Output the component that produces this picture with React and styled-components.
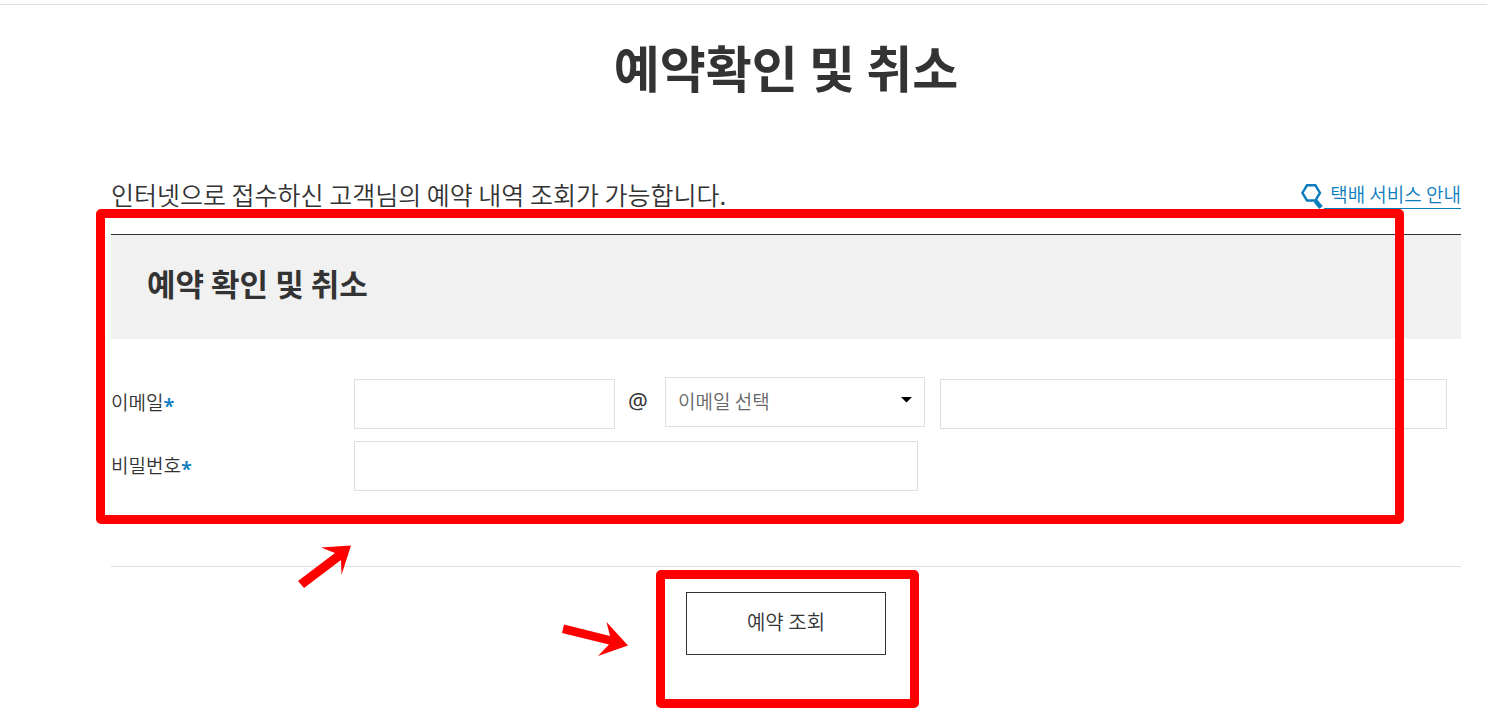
import styled, { createGlobalStyle } from "styled-components"

const colors = {
    text: '#333333',
    select_text: '#666666',
    blue: '#0b7dbd',
    panel_grey: '#f1f1f1',
    border: '#dfdfdf',
    mark_red: '#ff0000',
}

const GlobalStyle = createGlobalStyle`
    * {
        box-sizing: border-box;
    }
    body {
        margin: 0;
        background-color: white;
        color: ${colors.text};
        font-family: 'Noto Sans CJK KR', 'Noto Sans', sans-serif;
        font-size: 19px;
        line-height: 28px;
    }
    input, select, button {
        font: inherit;
        color: inherit;
    }
`

const TopLine = styled.div`
    height: 5px;
    border-bottom: 1px solid ${colors.border};
`
const Page = styled.main`
    padding: 29px 26px 64px 111px;
`
const PageTitle = styled.h1`
    margin: 0 0 82px;
    font-size: 50px;
    line-height: 64px;
    font-weight: 700;
    text-align: center;
`
const IntroRow = styled.div`
    display: flex;
    align-items: flex-start;
    justify-content: space-between;
    height: 54px;
`
const IntroText = styled.p`
    margin: 0;
    font-size: 25px;
    font-weight: 350;
`
const GuideLink = styled.a`
    display: flex;
    align-items: flex-start;
    color: ${colors.blue};
    font-weight: 350;
    text-decoration: none;

    svg {
        margin-top: 4px;
    }
`
const GuideText = styled.span`
    padding-left: 6px;
    border-bottom: 1px solid ${colors.blue};
`
const FormSection = styled.section`
    position: relative;
    border-top: 1px solid ${colors.text};
    border-bottom: 1px solid ${colors.border};
    padding-bottom: 63px;
`
const SectionTitle = styled.h2`
    margin: 0 0 38px;
    padding: 26px 36px 34px;
    background-color: ${colors.panel_grey};
    font-size: 31px;
    line-height: 44px;
    font-weight: 700;
`
const FieldRow = styled.div`
    display: flex;
    align-items: flex-start;
    margin-bottom: 12px;
`
const FieldLabel = styled.label`
    flex: 0 0 243px;
    line-height: 50px;
    font-weight: 350;
`
const PasswordLabel = styled(FieldLabel)`
    line-height: 48px;
`
const Star = styled.span`
    color: ${colors.blue};
    font-family: 'Noto Sans', sans-serif;
    font-size: 20px;
    font-weight: 600;
    line-height: 1;
    vertical-align: -3px;
`
const Fields = styled.div`
    flex: 1;
    display: flex;
    align-items: flex-end;
    padding-right: 14px;
    height: 52px;
`
const TextInput = styled.input`
    flex: ${props => props.$grow} 1 ${props => props.$grow}px;
    min-width: 0;
    height: 50px;
    padding: 0 12px;
    border: 1px solid ${colors.border};
    border-radius: 0;
    background-color: white;
`
const AtSign = styled.span`
    flex: 0 0 50px;
    align-self: flex-start;
    padding-right: 4px;
    line-height: 46px;
    text-align: center;
    font-family: 'Noto Sans', sans-serif;
    font-size: 22px;
`
const SelectBox = styled.div`
    position: relative;
    flex: 260 1 260px;
    align-self: flex-start;
    margin-right: 15px;

    svg {
        position: absolute;
        top: 20px;
        right: 13px;
        pointer-events: none;
    }
`
const Select = styled.select`
    display: block;
    width: 100%;
    height: 50px;
    padding: 0 12px 2px;
    border: 1px solid ${colors.border};
    border-radius: 0;
    background-color: white;
    color: ${colors.select_text};
    font-weight: 350;
    appearance: none;
`
const PasswordField = styled.div`
    flex: 1;
    display: flex;
`
const PasswordSpace = styled.div`
    flex: 543 1 543px;
`
const ButtonRow = styled.div`
    display: flex;
    justify-content: center;
    padding-top: 25px;
`
const ButtonBox = styled.div`
    position: relative;
`
const SubmitButton = styled.button`
    display: block;
    width: 200px;
    height: 63px;
    padding: 0 0 4px;
    border: 1px solid ${colors.text};
    background-color: white;
    font-size: 20px;
    font-weight: 350;
    cursor: pointer;
`
const MarkFrame = styled.div`
    position: absolute;
    border: 9px solid ${colors.mark_red};
    border-radius: 5px;
    pointer-events: none;
`
const FormMark = styled(MarkFrame)`
    top: -26px;
    right: 57px;
    bottom: 42px;
    left: -15px;
`
const ButtonMark = styled(MarkFrame)`
    top: -22px;
    right: -33px;
    bottom: -53px;
    left: -30px;
`
const FormArrow = styled.svg`
    position: absolute;
    bottom: -22px;
    left: 186px;
`
const ButtonArrow = styled.svg`
    position: absolute;
    top: 28px;
    left: -126px;
`

const SearchIcon = () => {
    return <svg width="23" height="25" viewBox="0 0 23 25" fill="none" stroke={colors.blue} aria-hidden="true">
        <path d="M6 1.3H14.4L19 9L14.4 16.5H6L1.4 9Z" strokeWidth="2.4"/>
        <path d="M14.5 17L20 23.5" strokeWidth="4.4"/>
    </svg>
}

export default function App() {
    return <>
        <GlobalStyle/>
        <TopLine/>
        <Page>
            <PageTitle>예약확인 및 취소</PageTitle>
            <IntroRow>
                <IntroText>인터넷으로 접수하신 고객님의 예약 내역 조회가 가능합니다.</IntroText>
                <GuideLink href="#guide">
                    <SearchIcon/>
                    <GuideText>택배 서비스 안내</GuideText>
                </GuideLink>
            </IntroRow>
            <form onSubmit={e => e.preventDefault()}>
                <FormSection>
                    <SectionTitle>예약 확인 및 취소</SectionTitle>
                    <FieldRow>
                        <FieldLabel htmlFor="email">이메일<Star>*</Star></FieldLabel>
                        <Fields>
                            <TextInput id="email" type="text" $grow={261}/>
                            <AtSign>@</AtSign>
                            <SelectBox>
                                <Select aria-label="이메일 선택">
                                    <option>이메일 선택</option>
                                </Select>
                                <svg width="11" height="6" viewBox="0 0 11 6" aria-hidden="true">
                                    <path d="M0 0H11L5.5 5.5Z" fill="black"/>
                                </svg>
                            </SelectBox>
                            <TextInput type="text" aria-label="이메일" $grow={507}/>
                        </Fields>
                    </FieldRow>
                    <FieldRow>
                        <PasswordLabel htmlFor="password">비밀번호<Star>*</Star></PasswordLabel>
                        <PasswordField>
                            <TextInput id="password" type="password" $grow={564}/>
                            <PasswordSpace/>
                        </PasswordField>
                    </FieldRow>
                    <FormMark/>
                    <FormArrow width="56" height="48" viewBox="0 -2 56 48" aria-hidden="true">
                        <path d="M1 39L38 11L24 5.5L54 3.5L44.5 33L44 18L7 46Z" fill={colors.mark_red}/>
                    </FormArrow>
                </FormSection>
                <ButtonRow>
                    <ButtonBox>
                        <SubmitButton type="submit">예약 조회</SubmitButton>
                        <ButtonMark/>
                        <ButtonArrow width="70" height="42" viewBox="0 0 70 42" aria-hidden="true">
                            <path d="M4 4.5L50 16L46.5 2L68 25.5L38 36L49 24.5L2 13Z" fill={colors.mark_red}/>
                        </ButtonArrow>
                    </ButtonBox>
                </ButtonRow>
            </form>
        </Page>
    </>
}
